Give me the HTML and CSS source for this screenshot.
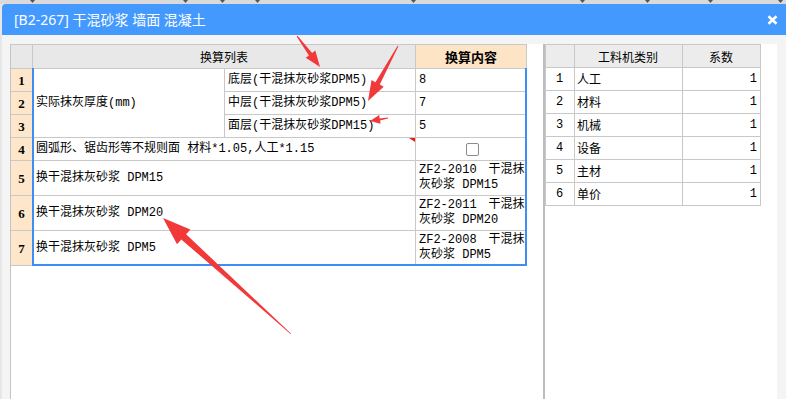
FILE: index.html
```html
<!DOCTYPE html>
<html lang="zh-CN">
<head>
<meta charset="utf-8">
<title>[B2-267] 干混砂浆 墙面 混凝土</title>
<link rel="stylesheet" href="styles.css">
</head>
<body>
<div class="topstrip">
  <svg width="786" height="4" viewBox="0 0 786 4">
    <g fill="#555">
      <polygon points="30,0 35,0 32.5,3"/>
      <polygon points="183,0 188,0 185.5,3"/>
      <polygon points="220,0 225,0 222.5,3"/>
      <polygon points="255,0 260,0 257.5,3"/>
      <polygon points="411,0 416,0 413.5,3"/>
      <polygon points="580,0 585,0 582.5,3"/>
      <polygon points="645,0 650,0 647.5,3"/>
      <polygon points="708,0 713,0 710.5,3"/>
      <polygon points="778,0 783,0 780.5,3"/>
    </g>
  </svg>
</div>
<div class="dialog">
  <div class="titlebar">
    <span class="title">[B2-267] 干混砂浆 墙面 混凝土</span>
    <svg class="close" width="11" height="10" viewBox="0 0 11 10"><path d="M1.5 1.3 L9.5 8.7 M9.5 1.3 L1.5 8.7" stroke="#fff" stroke-width="2.6" fill="none"/></svg>
  </div>
  <div class="content">
    <div class="left-panel">
      <div class="grid-wrap">
        <div class="conv-grid">
          <div class="c hd"></div>
          <div class="c hd span2c">换算列表</div>
          <div class="c hd-peach">换算内容</div>

          <div class="c num">1</div>
          <div class="c span3r">实际抹灰厚度(mm)</div>
          <div class="c">底层(干混抹灰砂浆DPM5)</div>
          <div class="c">8</div>

          <div class="c num">2</div>
          <div class="c">中层(干混抹灰砂浆DPM5)</div>
          <div class="c">7</div>

          <div class="c num">3</div>
          <div class="c">面层(干混抹灰砂浆DPM15)</div>
          <div class="c">5</div>

          <div class="c num">4</div>
          <div class="c span2c marked">圆弧形、锯齿形等不规则面 材料*1.05,人工*1.15</div>
          <div class="c center"><span class="checkbox"></span></div>

          <div class="c num">5</div>
          <div class="c span2c">换干混抹灰砂浆 DPM15</div>
          <div class="c two">ZF2-2010　干混抹<br>灰砂浆 DPM15</div>

          <div class="c num">6</div>
          <div class="c span2c">换干混抹灰砂浆 DPM20</div>
          <div class="c two">ZF2-2011　干混抹<br>灰砂浆 DPM20</div>

          <div class="c num">7</div>
          <div class="c span2c">换干混抹灰砂浆 DPM5</div>
          <div class="c two">ZF2-2008　干混抹<br>灰砂浆 DPM5</div>
        </div>
        <div class="selection"></div>
      </div>
    </div>
    <div class="right-panel">
      <div class="cat-grid">
        <div class="k kh"></div>
        <div class="k kh center">工料机类别</div>
        <div class="k kh center">系数</div>

        <div class="k center">1</div><div class="k">人工</div><div class="k right">1</div>
        <div class="k center">2</div><div class="k">材料</div><div class="k right">1</div>
        <div class="k center">3</div><div class="k">机械</div><div class="k right">1</div>
        <div class="k center">4</div><div class="k">设备</div><div class="k right">1</div>
        <div class="k center">5</div><div class="k">主材</div><div class="k right">1</div>
        <div class="k center">6</div><div class="k">单价</div><div class="k right">1</div>
      </div>
    </div>
  </div>
</div>
<svg class="annot" width="786" height="399" viewBox="0 0 786 399">
  <g fill="#f2393a">
    <polygon points="320,67 315.3,50.6 312.1,53 297.3,35.6 296.7,36.4 308.9,55.4 305.7,57.8"/>
    <polygon points="368,101 383.7,86.8 379.8,84.6 398.4,46.2 397.6,45.8 375.4,82.2 371.5,80"/>
    <polygon points="370,121 380.6,123.8 380.1,120.4 388.1,118.4 387.9,117.6 379.7,118.4 379.2,114.9"/>
    <polygon points="163,218 190.4,229.4 186.1,234.2 291.2,333.8 290.8,334.2 181.3,239.4 177,244.2"/>
  </g>
</svg>
</body>
</html>
```

FILE: styles.css
```css
* { box-sizing: border-box; }
html, body { margin: 0; height: 100%; }
body {
  background: #e6e6e6;
  overflow: hidden;
  position: relative;
  font-family: "Noto Sans CJK SC", sans-serif;
}
.topstrip { height: 4px; background: #dadada; }
.topstrip svg { display: block; }

.dialog {
  margin-left: 2px;
  height: 395px;
  display: flex;
  flex-direction: column;
}
.titlebar {
  height: 31px;
  flex: none;
  background: #4399fd;
  border-radius: 4px 0 0 0;
  display: flex;
  align-items: center;
  justify-content: space-between;
  padding: 0 8px 0 12px;
  color: #fff;
}
.title {
  font-family: "Noto Sans", "Noto Sans CJK SC", sans-serif;
  font-size: 14px;
  line-height: 1;
}
.close { display: block; }

.content {
  flex: 1;
  background: #f4f4f4;
  display: flex;
  padding: 9px 0 0 8px;
}
.left-panel {
  width: 535px;
  flex: none;
  background: #fff;
  border-left: 1px solid #c4c4c4;
  border-right: 2px solid #bdbdbd;
}
.right-panel {
  width: 232px;
  flex: none;
  background: #fff;
}

.grid-wrap { position: relative; width: fit-content; }
.conv-grid {
  display: grid;
  grid-template-columns: 21px 191px 190px 110px;
  grid-template-rows: 23px 22px 22px 22px 22px 34px 34px 34px;
  gap: 1px;
  background: #c8c8c8;
  border-top: 1px solid #c8c8c8;
  border-right: 1px solid #c8c8c8;
  border-bottom: 1px solid #c8c8c8;
  font-family: "Liberation Mono", "Noto Sans CJK SC", monospace;
  font-size: 12px;
  color: #000;
}
.c {
  background: #fff;
  display: flex;
  align-items: center;
  padding: 0 3px;
  white-space: nowrap;
  overflow: hidden;
  line-height: 15px;
}
.span2c { grid-column: span 2; }
.span3r { grid-row: span 3; }
.hd { background: #e8e8e8; justify-content: center; font-family: "Noto Sans CJK SC", sans-serif; }
.hd-peach {
  background: #fde4c4;
  justify-content: center;
  font-family: "Noto Sans CJK SC", sans-serif;
  font-weight: 700;
  font-size: 13px;
}
.num {
  background: #fde6ca;
  justify-content: center;
  font-family: "Liberation Serif", serif;
  font-weight: 700;
  font-size: 13px;
}
.center { justify-content: center; }
.right { justify-content: flex-end; }
.two { padding-top: 0; }
.marked { position: relative; overflow: visible; }
.marked::after {
  content: "";
  position: absolute;
  top: 0;
  right: 0;
  border-top: 4px solid #f01818;
  border-left: 6px solid transparent;
}
.checkbox {
  width: 13px;
  height: 13px;
  border: 1px solid #8c8c8c;
  border-radius: 2px;
  background: #fff;
  margin-left: 2px;
}
.selection {
  position: absolute;
  left: 21px;
  top: 24px;
  width: 495px;
  height: 198px;
  border: 2px solid #3d8ef5;
  border-top: none;
  pointer-events: none;
}

.cat-grid {
  display: grid;
  grid-template-columns: 28px 107px 77px;
  grid-auto-rows: 22px;
  gap: 1px;
  width: fit-content;
  background: #c8c8c8;
  border: 1px solid #c8c8c8;
  font-family: "Liberation Mono", "Noto Sans CJK SC", monospace;
  font-size: 12px;
  color: #000;
}
.k {
  background: #fff;
  display: flex;
  align-items: center;
  padding: 0 3px 0 2px;
  white-space: nowrap;
}
.kh { background: #ececec; font-family: "Noto Sans CJK SC", sans-serif; }

.annot {
  position: absolute;
  left: 0;
  top: 0;
  pointer-events: none;
}
```
